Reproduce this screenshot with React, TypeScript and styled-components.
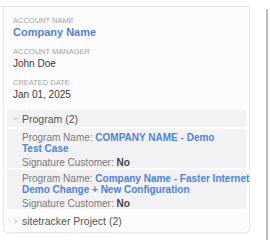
import React from "react";
import styled, { createGlobalStyle } from "styled-components";

const GlobalStyle = createGlobalStyle`
  html, body { margin: 0; padding: 0; background: #ffffff; }
  body { font-family: "Liberation Sans", Arial, sans-serif; }
`;

const Page = styled.div`
  position: relative;
  width: 270px;
  height: 240px;
  padding-top: 6px;
  box-sizing: border-box;
  overflow: hidden;
`;

const Panel = styled.div`
  width: 250px;
  border-top: 1px solid #e6e6e8;
`;

const Card = styled.div`
  margin-left: 3px;
  width: 247px;
  box-sizing: border-box;
  background: #fcfcfd;
  border: 1px solid #e8e8ea;
  border-top: none;
  border-radius: 0 0 5px 5px;
  box-shadow: 0 1px 2px rgba(0, 0, 0, 0.06);
  padding: 9px 3px 2px 3px;
  display: flex;
  flex-direction: column;
`;

const Fields = styled.div`
  display: flex;
  flex-direction: column;
  gap: 8px;
  padding-left: 6px;
`;

const Field = styled.div`
  display: flex;
  flex-direction: column;
`;

const Label = styled.div`
  font-size: 7.5px;
  line-height: 10px;
  color: #a3a3a6;
  text-transform: uppercase;
`;

const Value = styled.div<{ $link?: boolean }>`
  font-size: ${(p) => (p.$link ? "11px" : "10px")};
  line-height: 13px;
  font-weight: ${(p) => (p.$link ? 700 : 400)};
  color: ${(p) => (p.$link ? "#5183d6" : "#3a3a3c")};
`;

const Section = styled.div`
  margin-top: 9px;
  display: flex;
  flex-direction: column;
  gap: 2px;
`;

const Header = styled.div<{ $plain?: boolean }>`
  height: ${(p) => (p.$plain ? "18px" : "17px")};
  display: flex;
  align-items: center;
  gap: 4px;
  padding-left: 6px;
  background: ${(p) => (p.$plain ? "transparent" : "#f2f2f4")};
  margin-top: ${(p) => (p.$plain ? "3px" : "0")};
  font-size: 10.5px;
  color: #555558;
`;

const Chevron = styled.svg`
  width: 5px;
  height: 5px;
  flex: none;
`;

const Item = styled.div`
  background: #f2f2f4;
  padding: 3px 0 0 15px;
  display: flex;
  flex-direction: column;
  gap: 3px;
`;

const Line = styled.div`
  font-size: 10px;
  line-height: 11px;
  color: #7a7a7e;
  white-space: nowrap;
`;

const Link = styled.span`
  color: #5183d6;
  font-weight: 700;
`;

const Strong = styled.span`
  color: #444447;
  font-weight: 700;
`;

const Scrollbar = styled.div`
  position: absolute;
  left: 266px;
  top: 9px;
  bottom: 0;
  width: 2px;
  background: #bdbdc0;
`;

const Down = () => (
  <Chevron viewBox="0 0 6 6">
    <path d="M0.8 1.8 L3 4.2 L5.2 1.8" fill="none" stroke="#9a9a9e" strokeWidth="0.9" />
  </Chevron>
);

const Right = () => (
  <Chevron viewBox="0 0 6 6">
    <path d="M1.8 0.8 L4.2 3 L1.8 5.2" fill="none" stroke="#9a9a9e" strokeWidth="0.9" />
  </Chevron>
);

const programs = [
  { name: ["COMPANY NAME - Demo", "Test Case"], signature: "No" },
  { name: ["Company Name - Faster Internet", "Demo Change + New Configuration"], signature: "No" },
];

export default function App() {
  return (
    <>
      <GlobalStyle />
      <Page>
        <Panel>
          <Card>
            <Fields>
              <Field>
                <Label>Account Name</Label>
                <Value $link>Company Name</Value>
              </Field>
              <Field>
                <Label>Account Manager</Label>
                <Value>John Doe</Value>
              </Field>
              <Field>
                <Label>Created Date</Label>
                <Value>Jan 01, 2025</Value>
              </Field>
            </Fields>
            <Section>
              <Header>
                <Down />
                Program (2)
              </Header>
              {programs.map((p, i) => (
                <Item key={i}>
                  <div>
                    <Line>
                      Program Name: <Link>{p.name[0]}</Link>
                    </Line>
                    <Line>
                      <Link>{p.name[1]}</Link>
                    </Line>
                  </div>
                  <Line>
                    Signature Customer: <Strong>{p.signature}</Strong>
                  </Line>
                </Item>
              ))}
            </Section>
            <Header $plain>
              <Right />
              sitetracker Project (2)
            </Header>
          </Card>
        </Panel>
        <Scrollbar />
      </Page>
    </>
  );
}
